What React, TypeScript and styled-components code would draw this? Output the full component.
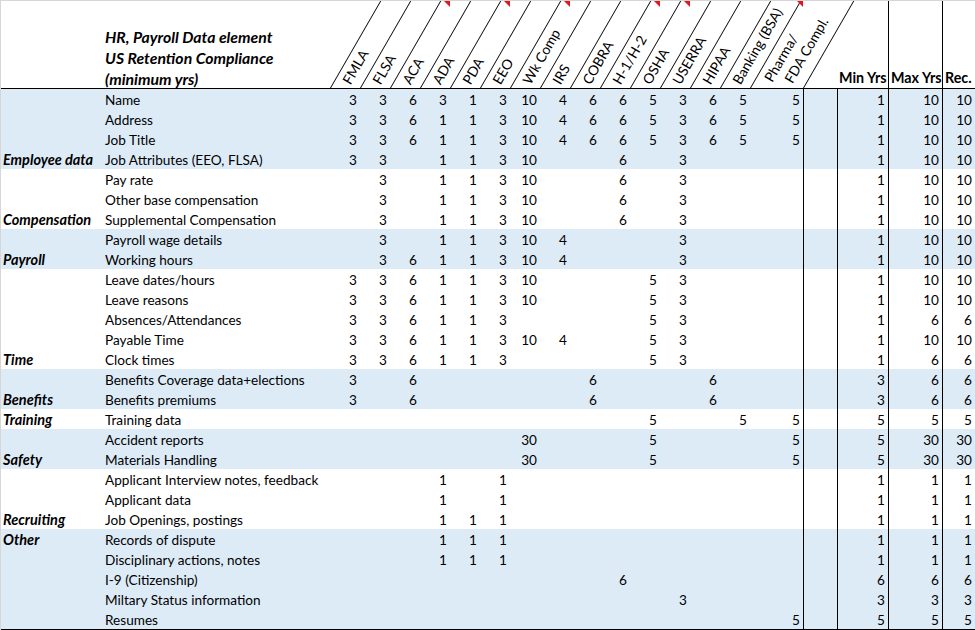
import React from 'react';
import styled, { createGlobalStyle } from 'styled-components';

const GlobalStyle = createGlobalStyle`
  html, body {
    margin: 0;
    padding: 0;
    background: #fff;
  }
  body {
    font-family: Lato, 'Open Sans', sans-serif;
    color: #000;
  }
`;

// category, item, 14 x 30px regs, pharma, blank, min, max, rec
const COLS = '101px 228px repeat(14, 30px) 53px 34px 51px 54px 33px';

const Sheet = styled.div`
  width: 975px;
  height: 630px;
  box-sizing: border-box;
  border-top: 1px solid #d6d6d6;
  border-left: 1px solid #d6d6d6;
  overflow: hidden;
  font-family: Lato, 'Open Sans', sans-serif;
  font-size: 13.6px;
`;

const HeaderRow = styled.div`
  display: grid;
  grid-template-columns: ${COLS};
  height: 88px;
  box-sizing: border-box;
  border-bottom: 1px solid #000;
`;

const TitleCell = styled.div`
  grid-column: 2 / 3;
  align-self: end;
  padding-left: 3px;
  margin-bottom: -1px;
  font-size: 15.8px;
  font-weight: 700;
  font-style: italic;
  line-height: 21px;
  white-space: nowrap;
`;

const SlantCell = styled.div`
  position: relative;
  height: 100%;
`;

const SlantLine = styled.div`
  position: absolute;
  left: 0;
  bottom: 0;
  width: 0;
  height: 100%;
  border-left: 1px solid #000;
  transform: skewX(-30deg);
  transform-origin: 0 100%;
`;

const SlantLabel = styled.span<{ $along: number; $perp: number }>`
  position: absolute;
  left: 50%;
  bottom: 0;
  font-size: 13.8px;
  line-height: 15px;
  white-space: nowrap;
  transform-origin: 0 50%;
  transform: translateY(50%) rotate(-60deg)
    translate(${p => p.$along}px, ${p => p.$perp}px);
`;

const Flag = styled.span`
  position: absolute;
  top: 0;
  right: 0;
  width: 0;
  height: 0;
  border-top: 6px solid #e3161d;
  border-left: 6px solid transparent;
`;

const SumHead = styled.div<{ $line?: boolean }>`
  display: flex;
  align-items: flex-end;
  padding-left: 2px;
  padding-bottom: 1px;
  font-size: 14.3px;
  font-weight: 700;
  white-space: nowrap;
  line-height: 18px;
  box-sizing: border-box;
  border-left: ${p => (p.$line ? '1px solid #000' : 'none')};
`;

const Row = styled.div<{ $band: boolean }>`
  display: grid;
  grid-template-columns: ${COLS};
  height: 20px;
  line-height: 22px;
  background: ${p => (p.$band ? '#ddebf7' : '#fff')};
`;

const CatCell = styled.div`
  padding-left: 2px;
  font-size: 14.5px;
  font-weight: 700;
  font-style: italic;
  white-space: nowrap;
`;

const ItemCell = styled.div`
  padding-left: 3px;
  white-space: nowrap;
`;

const NumCell = styled.div<{ $line?: boolean }>`
  box-sizing: border-box;
  text-align: right;
  padding-right: 3px;
  border-left: ${p => (p.$line ? '1px solid #000' : 'none')};
`;

const Body = styled.div`
  border-bottom: 1px solid #000;
`;

const regs: { name: string; flag?: boolean }[] = [
  { name: 'FMLA' },
  { name: 'FLSA' },
  { name: 'ACA' },
  { name: 'ADA', flag: true },
  { name: 'PDA' },
  { name: 'EEO', flag: true },
  { name: 'Wk Comp' },
  { name: 'IRS', flag: true },
  { name: 'COBRA' },
  { name: 'H-1/H-2' },
  { name: 'OSHA', flag: true },
  { name: 'USERRA', flag: true },
  { name: 'HIPAA' },
  { name: 'Banking (BSA)' },
];

type Line = { cat?: string; item: string; v: string; band: boolean };

// 15 regs, blank col, min, max, rec ('.' = empty)
const rows: Line[] = [
  { item: 'Name', v: '3 3 6 3 1 3 10 4 6 6 5 3 6 5 5 . 1 10 10', band: true },
  { item: 'Address', v: '3 3 6 1 1 3 10 4 6 6 5 3 6 5 5 . 1 10 10', band: true },
  { item: 'Job Title', v: '3 3 6 1 1 3 10 4 6 6 5 3 6 5 5 . 1 10 10', band: true },
  { cat: 'Employee data', item: 'Job Attributes (EEO, FLSA)', v: '3 3 . 1 1 3 10 . . 6 . 3 . . . . 1 10 10', band: true },
  { item: 'Pay rate', v: '. 3 . 1 1 3 10 . . 6 . 3 . . . . 1 10 10', band: false },
  { item: 'Other base compensation', v: '. 3 . 1 1 3 10 . . 6 . 3 . . . . 1 10 10', band: false },
  { cat: 'Compensation', item: 'Supplemental Compensation', v: '. 3 . 1 1 3 10 . . 6 . 3 . . . . 1 10 10', band: false },
  { item: 'Payroll wage details', v: '. 3 . 1 1 3 10 4 . . . 3 . . . . 1 10 10', band: true },
  { cat: 'Payroll', item: 'Working hours', v: '. 3 6 1 1 3 10 4 . . . 3 . . . . 1 10 10', band: true },
  { item: 'Leave dates/hours', v: '3 3 6 1 1 3 10 . . . 5 3 . . . . 1 10 10', band: false },
  { item: 'Leave reasons', v: '3 3 6 1 1 3 10 . . . 5 3 . . . . 1 10 10', band: false },
  { item: 'Absences/Attendances', v: '3 3 6 1 1 3 . . . . 5 3 . . . . 1 6 6', band: false },
  { item: 'Payable Time', v: '3 3 6 1 1 3 10 4 . . 5 3 . . . . 1 10 10', band: false },
  { cat: 'Time', item: 'Clock times', v: '3 3 6 1 1 3 . . . . 5 3 . . . . 1 6 6', band: false },
  { item: 'Benefits Coverage data+elections', v: '3 . 6 . . . . . 6 . . . 6 . . . 3 6 6', band: true },
  { cat: 'Benefits', item: 'Benefits premiums', v: '3 . 6 . . . . . 6 . . . 6 . . . 3 6 6', band: true },
  { cat: 'Training', item: 'Training data', v: '. . . . . . . . . . 5 . . 5 5 . 5 5 5', band: false },
  { item: 'Accident reports', v: '. . . . . . 30 . . . 5 . . . 5 . 5 30 30', band: true },
  { cat: 'Safety', item: 'Materials Handling', v: '. . . . . . 30 . . . 5 . . . 5 . 5 30 30', band: true },
  { item: 'Applicant Interview notes, feedback', v: '. . . 1 . 1 . . . . . . . . . . 1 1 1', band: false },
  { item: 'Applicant data', v: '. . . 1 . 1 . . . . . . . . . . 1 1 1', band: false },
  { cat: 'Recruiting', item: 'Job Openings, postings', v: '. . . 1 1 1 . . . . . . . . . . 1 1 1', band: false },
  { cat: 'Other', item: 'Records of dispute', v: '. . . 1 1 1 . . . . . . . . . . 1 1 1', band: true },
  { item: 'Disciplinary actions, notes', v: '. . . 1 1 1 . . . . . . . . . . 1 1 1', band: true },
  { item: 'I-9 (Citizenship)', v: '. . . . . . . . . 6 . . . . . . 6 6 6', band: true },
  { item: 'Miltary Status information', v: '. . . . . . . . . . . 3 . . . . 3 3 3', band: true },
  { item: 'Resumes', v: '. . . . . . . . . . . . . . 5 . 5 5 5', band: true },
];

// columns that carry a left rule in the body: blank, min, max, rec
const ruled = new Set([15, 16, 17, 18]);

const App: React.FC = () => {
  return (
    <>
      <GlobalStyle />
      <Sheet>
        <HeaderRow>
          <div />
          <TitleCell>
            HR, Payroll Data element
            <br />
            US Retention Compliance
            <br />
            (minimum yrs)
          </TitleCell>
          {regs.map(r => (
            <SlantCell key={r.name}>
              <SlantLine />
              <SlantLabel $along={5} $perp={-2}>{r.name}</SlantLabel>
              {r.flag && <Flag />}
            </SlantCell>
          ))}
          <SlantCell>
            <SlantLine />
            <SlantLabel $along={2} $perp={-12}>Pharma/</SlantLabel>
            <SlantLabel $along={11} $perp={6}>FDA Compl.</SlantLabel>
            <Flag />
          </SlantCell>
          <SlantCell>
            <SlantLine />
          </SlantCell>
          <SumHead>Min Yrs</SumHead>
          <SumHead $line>Max Yrs</SumHead>
          <SumHead $line>Rec.</SumHead>
        </HeaderRow>
        <Body>
          {rows.map(r => (
            <Row key={r.item} $band={r.band}>
              <CatCell>{r.cat}</CatCell>
              <ItemCell>{r.item}</ItemCell>
              {r.v.split(' ').map((n, i) => (
                <NumCell key={i} $line={ruled.has(i)}>
                  {n === '.' ? '' : n}
                </NumCell>
              ))}
            </Row>
          ))}
        </Body>
      </Sheet>
    </>
  );
};

export default App;
